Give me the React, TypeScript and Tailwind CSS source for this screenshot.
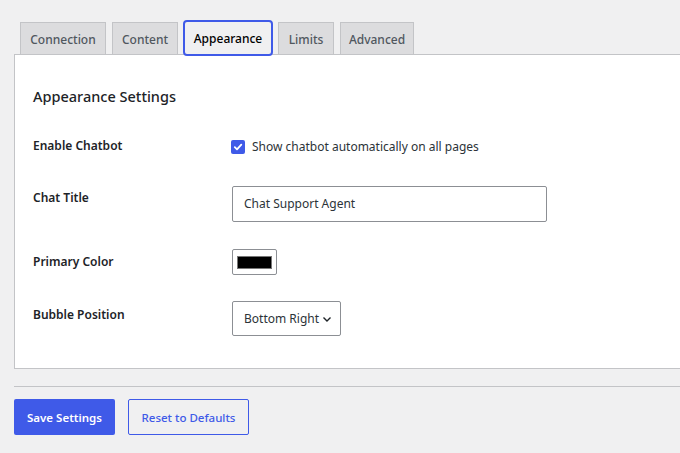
import React from "react";

const tabs: { t: string; w: string }[] = [
  { t: "Connection", w: "w-[86px]" },
  { t: "Content", w: "w-[66px]" },
  { t: "Appearance", w: "w-[90px]" },
  { t: "Limits", w: "w-[56px]" },
  { t: "Advanced", w: "w-[74px]" },
];

export default function App() {
  return (
    <div
      className="w-[680px] h-[453px] overflow-hidden bg-[#f0f0f1] text-[#1d2327]"
      style={{ fontFamily: '"Noto Sans", "Open Sans", sans-serif' }}
    >
      <div className="pl-[14px] pt-[22px]">
        <div className="flex items-end pl-[6px] relative z-10">
          {tabs.map(({ t, w }, i) =>
            t === "Appearance" ? (
              <div
                key={t}
                className={`${w} ml-[5px] -mt-[2px] -mb-[2px] h-[36px] pt-[1px] flex items-center justify-center bg-[#f0f0f1] border-2 border-[#3f5ae8] rounded-[4px] text-[12px] font-medium text-black`}
              >
                {t}
              </div>
            ) : (
              <div
                key={t}
                className={`${w} ${i === 0 ? "" : i === 3 ? "ml-[5px]" : "ml-[6px]"} h-[32px] pt-[2px] flex items-center justify-center bg-[#dcdcde] border border-[#c3c4c7] border-b-0 text-[12px] font-medium text-[#50575e]`}
              >
                {t}
              </div>
            )
          )}
        </div>
        <div className="bg-white border border-[#c3c4c7] border-r-0 h-[315px] pl-[18px] pt-[29px]">
          <div className="text-[14.5px] font-medium leading-[24px]">Appearance Settings</div>
          <div className="mt-[28px] flex items-center h-[20px]">
            <div className="w-[199px] text-[12px] font-semibold">Enable Chatbot</div>
            <div className="flex items-center gap-[7px] pt-[1px]">
              <span className="w-[14px] h-[14px] -ml-[1px] rounded-[2px] bg-[#3f5ae8] flex items-center justify-center">
                <svg width="10" height="10" viewBox="0 0 10 10">
                  <path d="M1.8 5.2 L4 7.4 L8.3 2.6" stroke="white" strokeWidth="1.8" fill="none" strokeLinecap="round" strokeLinejoin="round" />
                </svg>
              </span>
              <span className="text-[12px] text-[#2c3338]">Show chatbot automatically on all pages</span>
            </div>
          </div>
          <div className="mt-[30px] flex items-start">
            <div className="w-[199px] text-[12px] leading-[17px] font-semibold pt-[3px]">Chat Title</div>
            <div className="w-[315px] h-[36px] border border-[#8c8f94] rounded-[2px] flex items-center px-[11px] text-[12px] text-[#2c3338]">
              Chat Support Agent
            </div>
          </div>
          <div className="mt-[27px] flex items-center">
            <div className="w-[199px] text-[12px] font-semibold">Primary Color</div>
            <div className="w-[45px] h-[26px] border border-[#8c8f94] rounded-[2px] flex items-center justify-center">
              <div className="w-[35px] h-[13px] bg-black border border-[#777]" />
            </div>
          </div>
          <div className="mt-[26px] flex items-start">
            <div className="w-[199px] text-[12px] leading-[17px] font-semibold pt-[5px]">Bubble Position</div>
            <div className="w-[109px] h-[35px] border border-[#8c8f94] rounded-[2px] flex items-center pl-[11px] gap-[3px] text-[12px] text-[#2c3338]">
              Bottom Right
              <svg width="10" height="10" viewBox="0 0 10 10">
                <path d="M1.5 3.5 L5 7 L8.5 3.5" stroke="#1d2327" strokeWidth="1.4" fill="none" />
              </svg>
            </div>
          </div>
        </div>
        <div className="mt-[17px] h-px bg-[#c3c4c7]" />
        <div className="mt-[12px] flex gap-[13px]">
          <button className="w-[101px] h-[36px] pt-[1px] rounded-[2px] bg-[#3f5ae8] text-white text-[11.5px] font-semibold">
            Save Settings
          </button>
          <button className="w-[121px] h-[36px] pt-[1px] rounded-[2px] border border-[#3f5ae8] text-[#3f5ae8] text-[11.5px] font-medium">
            Reset to Defaults
          </button>
        </div>
      </div>
    </div>
  );
}
